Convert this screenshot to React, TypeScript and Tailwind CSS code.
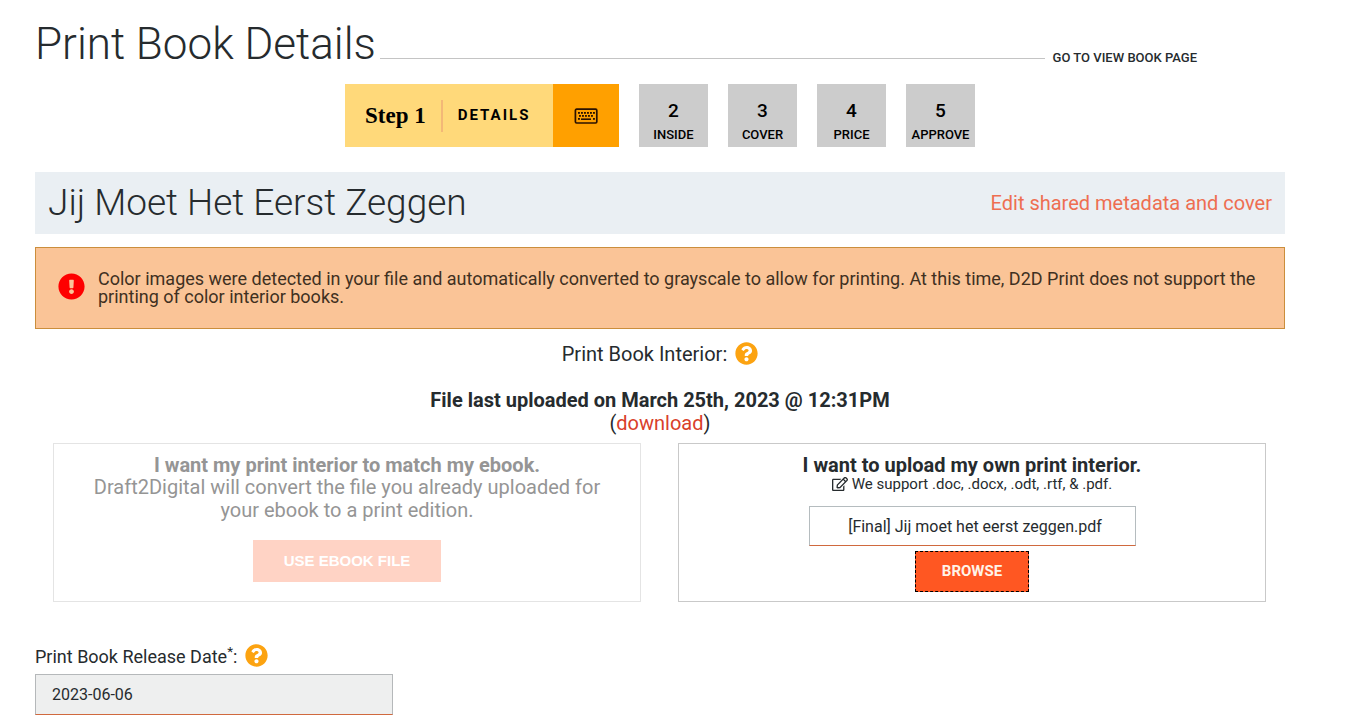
import React from "react";
import { FaExclamationCircle, FaQuestionCircle, FaRegEdit } from "react-icons/fa";

const steps = [
  { number: 2, label: "Inside" },
  { number: 3, label: "Cover" },
  { number: 4, label: "Price" },
  { number: 5, label: "Approve" },
];

const keyRows = [
  { y: 4, xs: [4, 7, 10, 13, 16, 19] },
  { y: 7, xs: [5, 8, 11, 14, 17] },
  { y: 10, xs: [4, 19] },
];

function KeyboardIcon() {
  return (
    <svg viewBox="0 0 24 16" className="h-4 w-6" fill="#2b1200" aria-hidden="true">
      <rect x="1.4" y="1.2" width="21.4" height="13.8" rx="1.2" fill="none" stroke="#2b1200" strokeWidth="1.7" />
      {keyRows.map((row) =>
        row.xs.map((x) => <rect key={x + "-" + row.y} x={x} y={row.y} width="1.9" height="1.8" />),
      )}
      <rect x="7" y="10.4" width="10" height="1.6" />
    </svg>
  );
}

function PageHeader() {
  return (
    <header className="flex items-end pr-[88px]">
      <h1 className="text-[44px] leading-[52px] font-light">Print Book Details</h1>
      <div className="mr-2 ml-1 mb-[11px] h-px flex-1 bg-[#c4c4c4]" />
      <a href="#view" className="mb-1 text-[13px] leading-4 font-medium uppercase">
        Go to view book page
      </a>
    </header>
  );
}

function StepNav() {
  return (
    <nav aria-label="Steps" className="mt-3.5 flex justify-center gap-5 text-black">
      <a href="#details" aria-current="step" className="flex h-[63px]">
        <span className="flex w-[208px] items-center bg-[#ffd97a] pl-5">
          <span className="pt-0.5 font-['Liberation_Serif',serif] text-[23px] font-bold">Step 1</span>
          <span className="mx-[15px] h-8 w-0.5 bg-[#f3b877]" />
          <span className="text-[15px] font-bold tracking-[2px] uppercase">Details</span>
        </span>
        <span className="flex w-[66px] items-center justify-center bg-[#ffa000]">
          <KeyboardIcon />
        </span>
      </a>
      {steps.map((step) => (
        <a
          key={step.number}
          href={"#" + step.label.toLowerCase()}
          className="flex h-[63px] w-[69px] flex-col items-center bg-[#cccccc] pt-4 font-medium"
        >
          <span className="text-[19px] leading-[22px]">{step.number}</span>
          <span className="pt-[5px] text-[13px] leading-4 uppercase">{step.label}</span>
        </a>
      ))}
    </nav>
  );
}

function HelpButton({ label }: { label: string }) {
  return (
    <button type="button" aria-label={label} className="text-[#fca311]">
      <FaQuestionCircle className="size-[23px]" />
    </button>
  );
}

export default function App() {
  return (
    <main className="bg-white pt-[18px] pr-[61px] pl-[35px] font-[Roboto,sans-serif] text-[#262b2e]">
      <PageHeader />
      <StepNav />

      <section className="mt-[25px] flex items-center justify-between bg-[#eaeff3] px-[13px] py-[7px]">
        <h2 className="text-[37px] leading-[48px] font-light">Jij Moet Het Eerst Zeggen</h2>
        <a href="#metadata" className="text-xl text-[#ee6e51]">
          Edit shared metadata and cover
        </a>
      </section>

      <div
        role="alert"
        className="mt-[13px] flex items-start gap-[13px] border border-[#cb8e3c] bg-[#fac497] px-[22px] py-[22px] text-[#40301f]"
      >
        <FaExclamationCircle className="mt-[3px] size-[27px] shrink-0 text-[#fe0000]" />
        <p className="text-lg leading-[18px]">
          Color images were detected in your file and automatically converted to grayscale to allow for printing. At
          this time, D2D Print does not support the printing of color interior books.
        </p>
      </div>

      <section>
        <div className="mt-[13px] flex items-start justify-center gap-2 text-[20px] leading-6">
          <h3>Print Book Interior:</h3>
          <HelpButton label="About the print book interior" />
        </div>
        <p className="mt-[23px] text-center text-[20px] leading-[23px]">
          <strong className="font-bold">File last uploaded on March 25th, 2023 @ 12:31PM</strong>
          <br />(
          <a href="#download" className="text-[#d9402a]">
            download
          </a>
          )
        </p>

        <div className="mt-2 grid grid-cols-2 gap-[37px] pr-[19px] pl-[18px]">
          <div className="border border-[#e4e4e4] px-6 pt-2.5 pb-[19px] text-center text-[20px] text-[#959595]">
            <h4 className="leading-[22px] font-bold">I want my print interior to match my ebook.</h4>
            <p className="leading-[23px]">
              Draft2Digital will convert the file you already uploaded for your ebook to a print edition.
            </p>
            <button
              type="button"
              disabled
              className="mx-auto mt-[18px] block h-[42px] bg-[#ffd3c5] px-[31px] font-['Liberation_Sans',sans-serif] text-[15px] font-bold text-white uppercase"
            >
              Use ebook file
            </button>
          </div>

          <div className="flex flex-col items-center border border-[#c9c9c9] pt-2.5 pb-2 text-center">
            <h4 className="text-[20px] leading-[22px] font-bold">I want to upload my own print interior.</h4>
            <p className="flex items-center gap-1 text-[15px] leading-4">
              <FaRegEdit className="size-4" />
              We support .doc, .docx, .odt, .rtf, &amp; .pdf.
            </p>
            <input
              type="text"
              readOnly
              aria-label="Print interior file"
              defaultValue="[Final] Jij moet het eerst zeggen.pdf"
              className="mt-[14px] h-10 w-[327px] border border-x-[#b5bcbf] border-t-[#b5bcbf] border-b-[#d0693e] pl-1.5 text-center text-base"
            />
            <button
              type="button"
              className="mt-[5px] h-[41px] w-[114px] border border-dashed border-black bg-[#ff5722] text-[15px] font-bold text-[#fff3e8] uppercase"
            >
              Browse
            </button>
          </div>
        </div>
      </section>

      <section className="mt-[42px] pb-2">
        <div className="flex items-start gap-2">
          <label htmlFor="release-date" className="pt-px text-lg leading-6">
            Print Book Release Date<sup>*</sup>:
          </label>
          <HelpButton label="About the release date" />
        </div>
        <input
          id="release-date"
          type="text"
          readOnly
          defaultValue="2023-06-06"
          className="mt-[5px] block h-[41px] w-[358px] border border-x-[#b5b8ba] border-t-[#b5b8ba] border-b-[#d0693e] bg-[#eeefef] px-4 text-base"
        />
      </section>
    </main>
  );
}
